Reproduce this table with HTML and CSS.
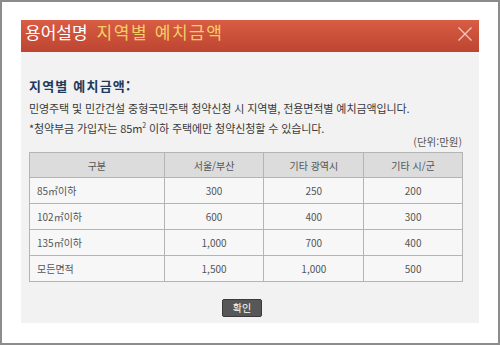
FILE: index.html
```html
<!DOCTYPE html>
<html lang="ko">
<head>
<meta charset="utf-8">
<title>용어설명</title>
<link rel="stylesheet" href="styles.css">
</head>
<body>
<div class="frame">
  <div class="dialog">
    <div class="header">
      <h1 class="title"><span class="title-main">용어설명</span><span class="title-sub">지역별 예치금액</span></h1>
      <span class="close" aria-label="닫기">
        <svg width="16" height="16" viewBox="0 0 16 16"><path d="M1.5 1.5 L14.5 14.5 M14.5 1.5 L1.5 14.5" stroke="#f3c9bd" stroke-width="1.3" fill="none"/></svg>
      </span>
    </div>
    <div class="body">
      <h2 class="heading">지역별 예치금액:</h2>
      <p class="desc">민영주택 및 민간건설 중형국민주택 청약신청 시 지역별, 전용면적별 예치금액입니다.</p>
      <p class="desc note">*청약부금 가입자는 85m<sup>2</sup> 이하 주택에만 청약신청할 수 있습니다.</p>
      <p class="unit">(단위:만원)</p>
      <table class="grid">
        <colgroup>
          <col class="c1"><col class="c2"><col class="c3"><col class="c4">
        </colgroup>
        <thead>
          <tr><th>구분</th><th>서울/부산</th><th>기타 광역시</th><th>기타 시/군</th></tr>
        </thead>
        <tbody>
          <tr><td class="label">85㎡이하</td><td>300</td><td>250</td><td>200</td></tr>
          <tr><td class="label">102㎡이하</td><td>600</td><td>400</td><td>300</td></tr>
          <tr><td class="label">135㎡이하</td><td>1,000</td><td>700</td><td>400</td></tr>
          <tr><td class="label">모든면적</td><td>1,500</td><td>1,000</td><td>500</td></tr>
        </tbody>
      </table>
      <div class="actions"><button class="btn" type="button">확인</button></div>
    </div>
  </div>
</div>
</body>
</html>
```
FILE: styles.css
```css
* { box-sizing: border-box; }
html, body { margin: 0; padding: 0; background: #fff; }
body {
  font-family: "Noto Sans CJK KR", "DejaVu Sans", sans-serif;
  color: #444;
}
.frame {
  width: 500px;
  height: 345px;
  border: 2px solid #8c8c8c;
  padding: 18px 0 0 19px;
  background: #fff;
}
.dialog { width: 458px; }
.header {
  height: 32px;
  background: linear-gradient(#d95c44, #bd4530);
  display: flex;
  align-items: flex-start;
  justify-content: space-between;
  padding: 0 4px 0 4px;
}
.title {
  margin: 0;
  font-weight: 400;
  font-size: 17px;
  line-height: 22px;
  padding-top: 1px;
  display: flex;
  gap: 9px;
}
.title-main { color: #fff; }
.title-sub { color: #f4cf63; letter-spacing: 1.6px; }
.close { display: flex; margin-top: 6px; margin-right: 2px; }
.body {
  height: 271px;
  background: #f2f2f2;
  padding: 25px 16px 0 8px;
}
.heading {
  margin: 0;
  font-size: 13px;
  font-weight: 700;
  line-height: 18px;
  color: #21395a;
  letter-spacing: 1.2px;
}
.desc {
  margin: 5px 0 0;
  font-size: 11px;
  line-height: 16px;
  color: #3a3a3a;
  letter-spacing: -0.1px;
}
.note { margin-top: 4px; }
.note sup { font-size: 7px; line-height: 0; }
.unit {
  margin: -1px 0 0;
  text-align: right;
  font-size: 10.5px;
  line-height: 14px;
  color: #555;
  padding-right: 1px;
}
.grid {
  margin-top: 3px;
  width: 434px;
  border-collapse: collapse;
  border: 1px solid #9c9c9c;
  font-size: 10px;
  color: #555;
}
.c1 { width: 135px; }
.c2 { width: 100px; }
.c3 { width: 100px; }
.c4 { width: 99px; }
.grid th {
  height: 25px;
  background: #dcdcdc;
  font-weight: 400;
  border: 1px solid #b4b4b4;
  padding: 0;
}
.grid td {
  height: 26px;
  background: #f7f7f7;
  border: 1px solid #b4b4b4;
  text-align: center;
  padding: 0;
}
.grid td.label { text-align: left; padding-left: 7px; }
.actions {
  display: flex;
  justify-content: center;
  padding-top: 17px;
  padding-right: 8px;
}
.btn {
  width: 40px;
  height: 18px;
  padding: 0;
  border: 1px solid #3a3a3a;
  border-radius: 2px;
  background: #575757;
  color: #fff;
  font-family: inherit;
  font-size: 10px;
  line-height: 14px;
}
```
